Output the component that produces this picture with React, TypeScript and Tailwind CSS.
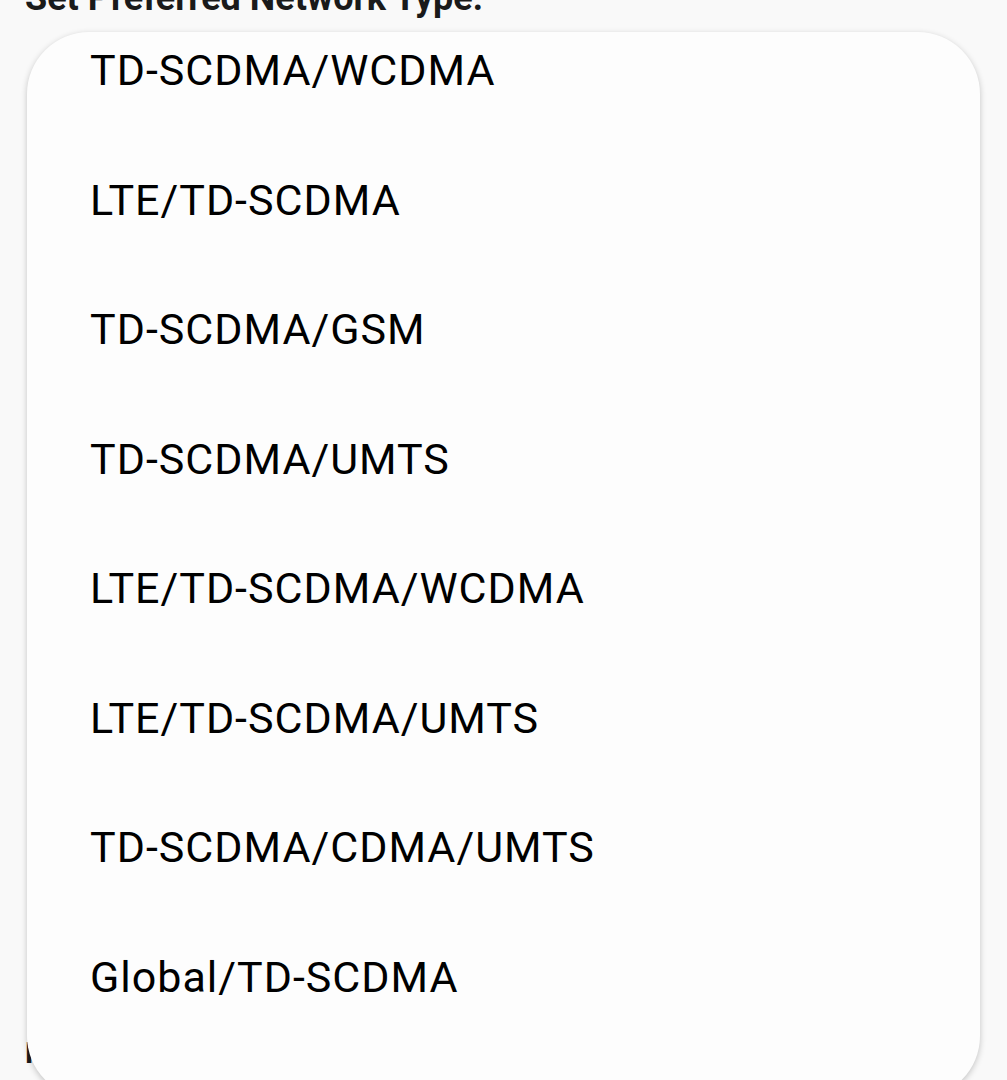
import React from "react";

const options = [
  "TD-SCDMA/WCDMA",
  "LTE/TD-SCDMA",
  "TD-SCDMA/GSM",
  "TD-SCDMA/UMTS",
  "LTE/TD-SCDMA/WCDMA",
  "LTE/TD-SCDMA/UMTS",
  "TD-SCDMA/CDMA/UMTS",
  "Global/TD-SCDMA",
];

export default function App() {
  return (
    <div
      className="relative h-[1080px] w-full overflow-hidden bg-[#f9f9f9]"
      style={{ fontFamily: "Roboto, 'Noto Sans', sans-serif" }}
    >
      {/* settings page behind the dialog */}
      <div className="px-[25px]">
        <div className="-mt-[22px] text-[36px] font-bold leading-[40px] text-[#1a1a1a]">
          Set Preferred Network Type:
        </div>
        <div className="mt-[1017px] text-[30px] font-bold leading-[36px] text-[#1a1a1a]">
          Ping Hostname
        </div>
      </div>

      {/* dialog */}
      <div className="absolute left-[27px] top-[32px] h-[1066px] w-[953px] rounded-[62px] bg-[#fdfdfd] shadow-[0_2px_6px_rgba(0,0,0,0.22)]">
        <ul className="pt-[13px]">
          {options.map((o) => (
            <li
              key={o}
              className="flex h-[129.5px] items-start pl-[63px] text-[43px] leading-[50px] tracking-[1px] text-black"
            >
              {o}
            </li>
          ))}
        </ul>
      </div>
    </div>
  );
}
